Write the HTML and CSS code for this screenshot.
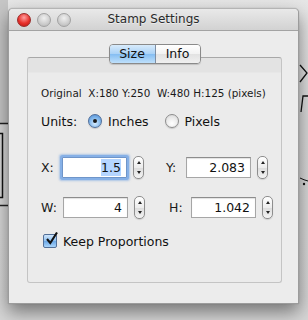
FILE: index.html
```html
<!DOCTYPE html>
<html>
<head>
<meta charset="utf-8">
<link rel="stylesheet" href="styles.css">
</head>
<body>
<div class="backdrop">
  <svg class="canvas-left" width="8" height="320" viewBox="0 0 8 320">
    <rect x="0" y="0" width="8" height="123" fill="#c6c6c6"/>
    <line x1="0" y1="123.5" x2="8" y2="123.5" stroke="#222" stroke-width="1.5"/>
    <path d="M0 133.5 H2.5 V197.5 H0" fill="none" stroke="#111" stroke-width="1.5"/>
    <line x1="0" y1="205.5" x2="8" y2="205.5" stroke="#222" stroke-width="1.5"/>
  </svg>
  <svg class="canvas-right" width="9" height="320" viewBox="0 0 9 320">
    <path d="M1 65 L8 73 L1 82" fill="none" stroke="#111" stroke-width="1.3"/>
    <path d="M2 112 L4 96 H9" fill="none" stroke="#111" stroke-width="1.3"/>
    <path d="M1 178 Q5 180 9 181" fill="none" stroke="#111" stroke-width="1"/>
    <circle cx="5" cy="184" r="1.2" fill="#111"/>
  </svg>
  <div class="window">
    <div class="titlebar">
      <div class="lights">
        <span class="light red"></span>
        <span class="light gray"></span>
        <span class="light gray"></span>
      </div>
      <div class="title">Stamp Settings</div>
    </div>
    <div class="content">
      <div class="seg">
        <span class="seg-item on">Size</span>
        <span class="seg-item">Info</span>
      </div>
      <div class="box">
        <div class="orig">Original&nbsp; X:180 Y:250&nbsp; W:480 H:125 (pixels)</div>
        <div class="units">
          <span class="units-label">Units:</span>
          <span class="radio on"></span><span class="radio-label">Inches</span>
          <span class="radio"></span><span class="radio-label">Pixels</span>
        </div>
        <div class="fields">
          <span class="flabel">X:</span>
          <span class="field focus"><span class="sel">1.5</span></span>
          <span class="stepper"><i class="up"></i><i class="down"></i></span>
          <span class="flabel second">Y:</span>
          <span class="field">2.083</span>
          <span class="stepper"><i class="up"></i><i class="down"></i></span>
        </div>
        <div class="fields row2">
          <span class="flabel">W:</span>
          <span class="field">4</span>
          <span class="stepper"><i class="up"></i><i class="down"></i></span>
          <span class="flabel second">H:</span>
          <span class="field">1.042</span>
          <span class="stepper"><i class="up"></i><i class="down"></i></span>
        </div>
        <div class="check-row">
          <span class="checkbox">
            <svg width="15" height="15" viewBox="0 0 15 15"><path d="M3 7 L6.3 11 L13 0.5" fill="none" stroke="#111" stroke-width="2.1"/></svg>
          </span>
          <span class="check-label">Keep Proportions</span>
        </div>
      </div>
    </div>
  </div>
</div>
</body>
</html>
```

FILE: styles.css
```css
html, body {
  margin: 0;
  padding: 0;
}
body {
  width: 308px;
  height: 320px;
  overflow: hidden;
  background: #e2e2e2;
  font-family: "DejaVu Sans", sans-serif;
  color: #111;
}
.backdrop {
  position: relative;
  width: 308px;
  height: 320px;
  padding: 8px 9px 0 8px;
  box-sizing: border-box;
  background: linear-gradient(to bottom, #e6e6e6 0, #d8d8d8 120px, #d6d6d6 100%);
}
.canvas-left {
  position: absolute;
  left: 0;
  top: 0;
}
.canvas-right {
  position: absolute;
  right: 0;
  top: 0;
}
.window {
  position: relative;
  width: 291px;
  height: 296px;
  box-sizing: border-box;
  border: 1px solid #9c9c9c;
  border-top-color: #b4b4b4;
  border-radius: 5px 5px 0 0;
  background: #ececec;
  box-shadow: 0 8px 18px rgba(0, 0, 0, 0.45), 0 0 1px rgba(0,0,0,.3);
  display: flex;
  flex-direction: column;
}
.titlebar {
  height: 21px;
  border-bottom: 1px solid #a3a3a3;
  border-radius: 4px 4px 0 0;
  background: linear-gradient(to bottom, #e9e9e9, #d2d2d2);
  display: flex;
  align-items: center;
  position: relative;
}
.lights {
  display: flex;
  gap: 6px;
  padding-left: 8px;
  padding-top: 1px;
}
.light {
  width: 14px;
  height: 14px;
  border-radius: 50%;
  box-sizing: border-box;
}
.light.red {
  background: radial-gradient(circle at 50% 30%, #ffa0a0 0, #e8312c 55%, #b81410 100%);
  border: 1px solid #9a2a28;
}
.light.gray {
  background: radial-gradient(circle at 50% 35%, #f0f0f0 0, #cfcfcf 55%, #b4b4b4 100%);
  border: 1px solid #a2a2a2;
}
.title {
  position: absolute;
  left: 0;
  right: 0;
  top: 3px;
  text-align: center;
  font-size: 12px;
  color: #2a2a2a;
  text-shadow: 0 1px 0 rgba(255,255,255,.5);
}
.content {
  flex: 1;
  padding: 13px 16px 0 18px;
  display: flex;
  flex-direction: column;
}
.seg {
  align-self: center;
  display: flex;
  height: 20px;
  box-sizing: border-box;
  border: 1px solid #8a8a8a;
  border-radius: 4px;
  overflow: hidden;
  margin-bottom: -7px;
  position: relative;
  z-index: 1;
  box-shadow: 0 1px 1px rgba(0,0,0,.15);
}
.seg-item {
  width: 44px;
  text-align: center;
  font-size: 12.5px;
  line-height: 18px;
  background: linear-gradient(to bottom, #ffffff, #f2f2f2 50%, #e2e2e2 51%, #f0f0f0);
}
.seg-item.on {
  width: 45px;
  border-right: 1px solid #7d8ea4;
  background: linear-gradient(to bottom, #d8ebfb, #a9d1f6 50%, #84bdf2 51%, #bfe0fb);
}
.box {
  height: 226px;
  box-sizing: border-box;
  border: 1px solid #c4c4c4;
  border-top-color: #a8a8a8;
  border-radius: 3px;
  background: linear-gradient(to bottom, #e3e3e3 0, #e3e3e3 14px, #ebebeb 15px, #ebebeb 100%);
  padding: 29px 0 0 13px;
}
.orig {
  font-size: 10.4px;
  line-height: 13px;
  white-space: nowrap;
  color: #1a1a1a;
}
.units {
  display: flex;
  align-items: center;
  margin-top: 13px;
  height: 16px;
  font-size: 12.5px;
}
.units-label {
  width: 47px;
}
.radio {
  width: 14px;
  height: 14px;
  border-radius: 50%;
  box-sizing: border-box;
  border: 1px solid #8d8d8d;
  background: radial-gradient(circle at 50% 70%, #ffffff 0, #ececec 50%, #d2d2d2 100%);
  box-shadow: 0 1px 1px rgba(0,0,0,.15);
  position: relative;
}
.radio.on {
  border-color: #4f6e9a;
  background: radial-gradient(circle at 50% 70%, #d6ecff 0, #7fb5ea 55%, #4a88d1 100%);
}
.radio.on::after {
  content: "";
  position: absolute;
  left: 4px;
  top: 4px;
  width: 4px;
  height: 4px;
  border-radius: 50%;
  background: #1a1a1a;
}
.radio-label {
  margin-left: 6px;
  margin-right: 16px;
}
.fields {
  display: flex;
  align-items: center;
  margin-top: 27px;
  height: 22px;
  font-size: 12.5px;
}
.fields.row2 {
  margin-top: 18px;
}
.flabel {
  width: 21px;
  color: #1a1a1a;
}
.flabel.second {
  width: 20px;
  margin-left: 22px;
}
.row2 .flabel {
  width: 22px;
}
.row2 .flabel.second {
  margin-left: 24px;
}
.field {
  width: 65px;
  height: 21px;
  box-sizing: border-box;
  border: 1px solid #a6a6a6;
  border-top-color: #8c8c8c;
  background: #fff;
  text-align: right;
  padding-right: 5px;
  line-height: 19px;
  font-size: 12.5px;
  box-shadow: inset 0 1px 1px rgba(0,0,0,.12);
}
.field.focus {
  border-color: #6f95c9;
  box-shadow: 0 0 0 2px #86b0e6, 0 0 2px 3px rgba(120,165,225,.55);
  border-radius: 1px;
}
.sel {
  background: #b5d5ff;
  padding: 1px 0;
}
.stepper {
  width: 11px;
  height: 23px;
  box-sizing: border-box;
  margin-left: 6px;
  border: 1px solid #8e8e8e;
  border-radius: 5px;
  background: linear-gradient(to bottom, #ffffff, #ededed 50%, #dcdcdc 51%, #f4f4f4);
  display: flex;
  flex-direction: column;
  align-items: center;
  justify-content: space-between;
  padding: 4px 0 4px;
  box-shadow: 0 1px 1px rgba(0,0,0,.12);
}
.stepper i {
  width: 0;
  height: 0;
  border-left: 2.5px solid transparent;
  border-right: 2.5px solid transparent;
}
.stepper i.up {
  border-bottom: 3px solid #222;
}
.stepper i.down {
  border-top: 3px solid #222;
}
.check-row {
  display: flex;
  align-items: center;
  margin-top: 15px;
  margin-left: 2px;
  height: 16px;
  font-size: 12.5px;
}
.checkbox {
  width: 14px;
  height: 14px;
  box-sizing: border-box;
  border: 1px solid #526f98;
  border-radius: 2px;
  background: linear-gradient(to bottom, #cfe5fb, #8ec0f0 50%, #6aa7e6 51%, #a9d4fa);
  position: relative;
}
.checkbox svg {
  position: absolute;
  left: 0;
  top: -3px;
}
.check-label {
  margin-left: 6px;
}
```
